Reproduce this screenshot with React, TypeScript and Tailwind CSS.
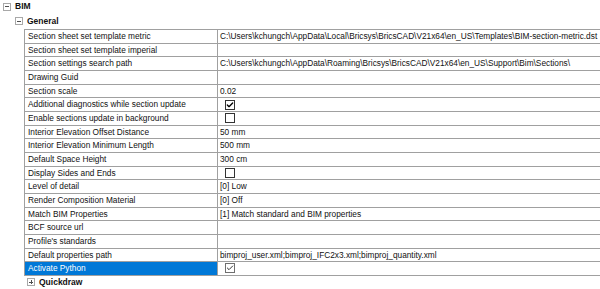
import { Check } from 'lucide-react';

type Row = {
  label: string;
  value?: string;
  check?: boolean;
  selected?: boolean;
};

const rows: Row[] = [
  { label: 'Section sheet set template metric', value: 'C:\\Users\\kchungch\\AppData\\Local\\Bricsys\\BricsCAD\\V21x64\\en_US\\Templates\\BIM-section-metric.dst' },
  { label: 'Section sheet set template imperial', value: '' },
  { label: 'Section settings search path', value: 'C:\\Users\\kchungch\\AppData\\Roaming\\Bricsys\\BricsCAD\\V21x64\\en_US\\Support\\Bim\\Sections\\' },
  { label: 'Drawing Guid', value: '' },
  { label: 'Section scale', value: '0.02' },
  { label: 'Additional diagnostics while section update', check: true },
  { label: 'Enable sections update in background', check: false },
  { label: 'Interior Elevation Offset Distance', value: '50 mm' },
  { label: 'Interior Elevation Minimum Length', value: '500 mm' },
  { label: 'Default Space Height', value: '300 cm' },
  { label: 'Display Sides and Ends', check: false },
  { label: 'Level of detail', value: '[0] Low' },
  { label: 'Render Composition Material', value: '[0] Off' },
  { label: 'Match BIM Properties', value: '[1] Match standard and BIM properties' },
  { label: 'BCF source url', value: '' },
  { label: "Profile's standards", value: '' },
  { label: 'Default properties path', value: 'bimproj_user.xml;bimproj_IFC2x3.xml;bimproj_quantity.xml' },
  { label: 'Activate Python', check: true, selected: true },
];

const Expander = ({ open }: { open: boolean }) => (
  <span className="w-[8px] h-[8px] border border-[#a8a8a8] bg-white flex items-center justify-center relative shrink-0">
    <span className="absolute w-[4px] h-px bg-[#505050]" />
    {!open && <span className="absolute w-px h-[4px] bg-[#505050]" />}
  </span>
);

const CheckBox = ({ checked, dim }: { checked: boolean; dim?: boolean }) => (
  <span
    className={`w-[10px] h-[10px] border flex items-center justify-center bg-white ${
      dim ? 'border-[#6f6f6f]' : 'border-[#333]'
    }`}
  >
    {checked && (
      <Check
        className={dim ? 'w-[8px] h-[8px] text-[#333]' : 'w-[8px] h-[8px] text-black'}
        strokeWidth={dim ? 3 : 4}
      />
    )}
  </span>
);

const App = () => {
  return (
    <div
      className="w-[600px] h-[289px] bg-white overflow-hidden text-[8.3px] text-[#111] leading-none"
      style={{ fontFamily: '"Liberation Sans", Arial, sans-serif' }}
    >
      <div className="h-[13px] flex items-center gap-[4px] pl-[3px]">
        <Expander open />
        <span className="font-bold text-[8.5px]">BIM</span>
      </div>
      <div className="h-[16px] flex items-center gap-[4px] pl-[15px]">
        <Expander open />
        <span className="font-bold text-[8.5px]">General</span>
      </div>
      <div className="ml-[24px] border-l border-t border-[#a0a0a0]">
        {rows.map((r) => (
          <div key={r.label} className="h-[13.67px] flex border-b border-[#a0a0a0]">
            <div
              className={`w-[193px] shrink-0 border-r border-[#a0a0a0] flex items-center pl-[3px] ${
                r.selected ? 'bg-[#0078d7] text-white' : ''
              }`}
            >
              {r.label}
            </div>
            <div className="flex-1 flex items-center pl-[2px] whitespace-nowrap overflow-hidden">
              {r.check !== undefined ? (
                <span className="pl-[5px]">
                  <CheckBox checked={r.check} dim={r.selected} />
                </span>
              ) : (
                r.value
              )}
            </div>
          </div>
        ))}
      </div>
      <div className="h-[13px] flex items-center gap-[4px] pl-[27px]">
        <Expander open={false} />
        <span className="font-bold text-[8.5px]">Quickdraw</span>
      </div>
    </div>
  );
};

export default App;
